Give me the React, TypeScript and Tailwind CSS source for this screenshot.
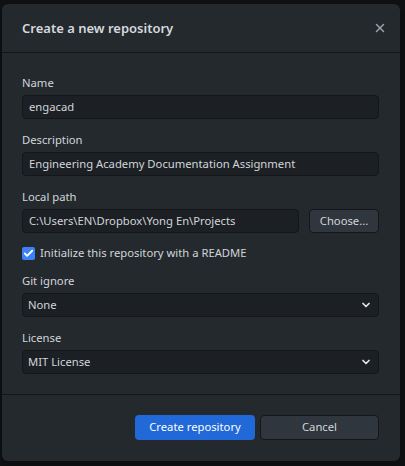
import { X, ChevronDown, Check } from 'lucide-react'

const font = { fontFamily: '"Noto Sans", "Open Sans", Arial, sans-serif' }

function Field({ label, children }: { label: string; children: React.ReactNode }) {
  return (
    <div className="flex flex-col gap-[4px]">
      <label className="text-[11.25px] leading-[16px] text-[#d1d5da]">{label}</label>
      {children}
    </div>
  )
}

function TextInput({ value, className = '' }: { value: string; className?: string }) {
  return (
    <div
      className={`flex h-[24px] items-center rounded-[4px] border border-[#141618] bg-[#1c2024] px-[6px] text-[11.25px] text-[#d1d5da] ${className}`}
    >
      {value}
    </div>
  )
}

function Select({ value }: { value: string }) {
  return (
    <div className="flex h-[24px] items-center justify-between rounded-[4px] border border-[#141618] bg-[#1c2024] pl-[5px] pr-[6px] text-[11.25px] text-[#d1d5da]">
      <span>{value}</span>
      <ChevronDown className="h-[12px] w-[12px] text-[#e1e4e8]" strokeWidth={3.5} />
    </div>
  )
}

export default function App() {
  return (
    <div className="h-[466px] w-[405px] bg-[#0e1012] pt-[4px] pl-[2px]" style={font}>
      <div className="flex h-[457px] w-[398px] flex-col rounded-[6px] bg-[#24292e] shadow-lg">
        {/* header */}
        <div className="flex h-[49px] items-center justify-between border-b border-[#141618] pl-[20px] pr-[13px]">
          <h1 className="pt-[1px] text-[13px] font-semibold text-[#d5d9de]">Create a new repository</h1>
          <X className="h-[14px] w-[14px] text-[#9aa1a8]" strokeWidth={2.5} />
        </div>

        {/* body */}
        <div className="flex flex-col gap-[13px] border-b border-[#141618] pt-[22px] pb-[20px] pl-[20px] pr-[21px]">
          <Field label="Name">
            <TextInput value="engacad" />
          </Field>
          <Field label="Description">
            <TextInput value="Engineering Academy Documentation Assignment" />
          </Field>
          <Field label="Local path">
            <div className="flex gap-[10px]">
              <TextInput value="C:\Users\EN\Dropbox\Yong En\Projects" className="flex-1" />
              <button className="h-[24px] w-[70px] rounded-[4px] border border-[#141618] bg-[#2f363d] text-[11.25px] text-[#d1d5da]">
                Choose...
              </button>
            </div>
          </Field>
          <div className="-my-[1px] flex items-center gap-[5px]">
            <span className="flex h-[13px] w-[13px] items-center justify-center rounded-[2px] bg-[#3b82f6]">
              <Check className="h-[11px] w-[11px] text-white" strokeWidth={4} />
            </span>
            <span className="text-[11.25px] leading-[16px] text-[#d1d5da]">
              Initialize this repository with a README
            </span>
          </div>
          <Field label="Git ignore">
            <Select value="None" />
          </Field>
          <Field label="License">
            <Select value="MIT License" />
          </Field>
        </div>

        {/* footer */}
        <div className="flex justify-end gap-[5px] pt-[20px] pr-[21px]">
          <button className="h-[25px] w-[120px] rounded-[4px] bg-[#2168d9] text-[11.25px] text-white">
            Create repository
          </button>
          <button className="h-[25px] w-[119px] rounded-[4px] border border-[#141618] bg-[#2f363d] text-[11.25px] text-[#d1d5da]">
            Cancel
          </button>
        </div>
      </div>
    </div>
  )
}
